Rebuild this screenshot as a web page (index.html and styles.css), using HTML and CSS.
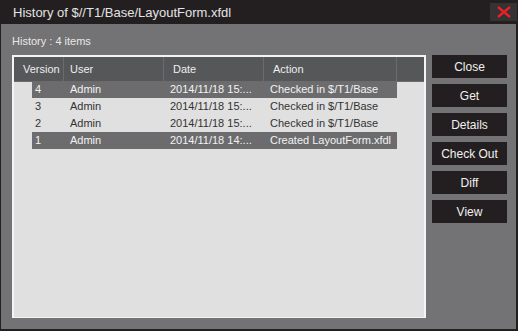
FILE: index.html
```html
<!DOCTYPE html>
<html lang="en">
<head>
  <meta charset="UTF-8">
  <title>History</title>
  <link rel="stylesheet" href="styles.css">
</head>
<body>
  <div class="window">
    <div class="titlebar">
      <span class="title">History of $//T1/Base/LayoutForm.xfdl</span>
      <button class="close-x">
        <svg width="14" height="12" viewBox="0 0 14 12">
          <path d="M1 1 L13 11 M13 1 L1 11" stroke="#e8202a" stroke-width="2.4" fill="none" />
        </svg>
      </button>
    </div>

    <div class="content">
      <div class="count">History : 4 items</div>
      <div class="main">
        <div class="list">
          <div class="list-head">
            <div class="col">Version</div>
            <div class="col col-user">User</div>
            <div class="col">Date</div>
            <div class="col">Action</div>
            <div class="col col-fill"></div>
          </div>
          <div class="row selected">
            <div>4</div><div>Admin</div><div>2014/11/18 15:...</div><div>Checked in $/T1/Base</div>
          </div>
          <div class="row">
            <div>3</div><div>Admin</div><div>2014/11/18 15:...</div><div>Checked in $/T1/Base</div>
          </div>
          <div class="row">
            <div>2</div><div>Admin</div><div>2014/11/18 15:...</div><div>Checked in $/T1/Base</div>
          </div>
          <div class="row selected">
            <div>1</div><div>Admin</div><div>2014/11/18 14:...</div><div>Created LayoutForm.xfdl</div>
          </div>
        </div>

        <div class="buttons">
          <button class="btn">Close</button>
          <button class="btn">Get</button>
          <button class="btn">Details</button>
          <button class="btn">Check Out</button>
          <button class="btn">Diff</button>
          <button class="btn">View</button>
        </div>
      </div>
    </div>
  </div>
</body>
</html>
```

FILE: styles.css
```css
body {
  margin: 0;
  font-family: 'Liberation Sans', Arial, sans-serif;
  background-color: #231f20;
}
.window {
  width: 518px;
  height: 331px;
  box-sizing: border-box;
  border: 1px solid #231f20;
  border-top: none;
  border-right-width: 2px;
  border-bottom-width: 2px;
  background-color: #737274;
  display: flex;
  flex-direction: column;
}
.titlebar {
  height: 24px;
  background-color: #231f20;
  display: flex;
  align-items: center;
  justify-content: space-between;
  padding: 0 1px 0 13px;
  margin: 0 -2px 0 -1px;
}
.title {
  color: #e4e4e4;
  font-size: 13px;
}
.close-x {
  width: 27px;
  height: 18px;
  border: none;
  padding: 0;
  background-color: #343233;
  display: flex;
  align-items: center;
  justify-content: center;
}
.content {
  flex: 1;
  padding: 0 9px 0 11px;
}
.count {
  color: #e8e8e8;
  font-size: 11px;
  line-height: 13px;
  margin: 11px 0 7px;
}
.main {
  display: flex;
  gap: 6px;
}
.list {
  width: 414px;
  height: 263px;
  box-sizing: border-box;
  border: 2px solid #f4f4f4;
  border-bottom-width: 1px;
  background-color: #e0e0e0;
  font-size: 11px;
}
.list-head {
  display: grid;
  grid-template-columns: 50px 100px 100px 133px 1fr;
  height: 24px;
  background-color: #555759;
  color: #eeeeee;
}
.col {
  line-height: 24px;
  padding-left: 9px;
  border-right: 1px solid #6b6b6d;
  border-bottom: 1px solid #6b6b6d;
}
.col-user {
  padding-left: 6px;
}
.col-fill {
  border-right: none;
}
.row {
  display: grid;
  grid-template-columns: 32px 100px 100px 133px;
  margin-left: 18px;
  width: 365px;
  height: 17px;
  line-height: 17px;
  color: #333333;
}
.row div {
  padding-left: 6px;
  white-space: nowrap;
  overflow: hidden;
}
.row div:first-child {
  padding-left: 3px;
}
.row.selected {
  background-color: #6c6c6e;
  color: #f2f2f2;
}
.buttons {
  display: flex;
  flex-direction: column;
  gap: 6px;
}
.btn {
  width: 75px;
  height: 23px;
  border: none;
  padding: 0;
  background-color: #231f20;
  color: #f0f0f0;
  font-family: 'Liberation Sans', Arial, sans-serif;
  font-size: 12px;
  cursor: pointer;
}
```
